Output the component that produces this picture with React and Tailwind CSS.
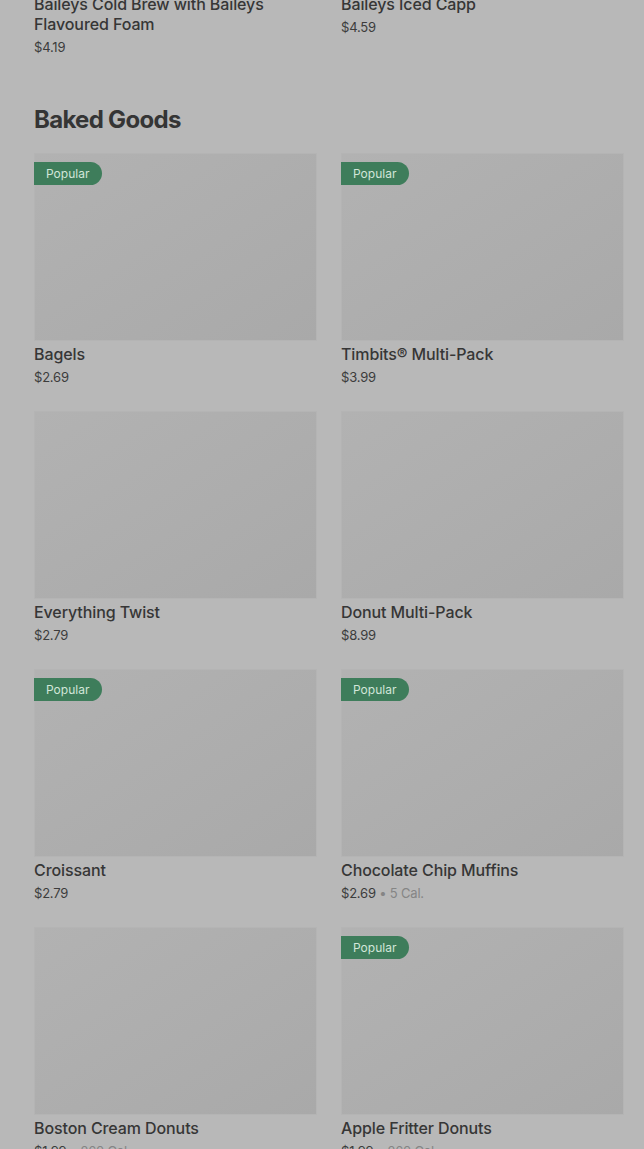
import React from "react";

const topItems = [
  { name: "Baileys Cold Brew with Baileys Flavoured Foam", price: "$4.19" },
  { name: "Baileys Iced Capp", price: "$4.59" },
];

const bakedGoods = [
  { name: "Bagels", price: "$2.69", popular: true },
  { name: "Timbits® Multi-Pack", price: "$3.99", popular: true },
  { name: "Everything Twist", price: "$2.79" },
  { name: "Donut Multi-Pack", price: "$8.99" },
  { name: "Croissant", price: "$2.79", popular: true },
  { name: "Chocolate Chip Muffins", price: "$2.69", cal: "5 Cal.", popular: true },
  { name: "Boston Cream Donuts", price: "$1.99", cal: "260 Cal." },
  { name: "Apple Fritter Donuts", price: "$1.99", cal: "260 Cal.", popular: true },
];

const Price = ({ price, cal }) => (
  <p className="mt-[4px] text-[13px] leading-[18px] tracking-[-0.2px] text-[#3c3c3c]">
    {price}
    {cal && <span className="text-[#858585]"> • {cal}</span>}
  </p>
);

const ItemCard = ({ item }) => (
  <div className="flex flex-col">
    <div className="relative h-[188px] bg-gradient-to-br from-[#b2b2b2] to-[#a9a9a9] border border-[#b4b4b4]">
      {item.popular && (
        <span className="absolute left-[-1px] top-[8px] h-[23px] flex items-center pl-[12px] pr-[13px] rounded-r-full bg-[#3e7d5b] text-[12px] text-[#d2e6d9]">
          Popular
        </span>
      )}
    </div>
    <h3 className="mt-[3px] text-[16px] leading-5 font-medium tracking-[-0.1px] text-[#363636]">
      {item.name}
    </h3>
    <Price price={item.price} cal={item.cal} />
  </div>
);

export default function App() {
  return (
    <div
      className="h-[1149px] overflow-hidden bg-[#b8b8b8] pl-[34px] pr-[20px]"
      style={{ fontFamily: "Inter, 'Noto Sans', sans-serif" }}
    >
      <div className="grid grid-cols-2 gap-x-[24px] mt-[-6px]">
        {topItems.map((item) => (
          <div key={item.name} className="flex flex-col">
            <h3 className="text-[16px] leading-5 font-medium tracking-[-0.1px] text-[#363636]">
              {item.name}
            </h3>
            <Price price={item.price} />
          </div>
        ))}
      </div>

      <h2 className="mt-[48px] mb-[17px] text-[24px] leading-[32px] font-bold tracking-[-0.7px] text-[#353535]">
        Baked Goods
      </h2>

      <div className="grid grid-cols-2 gap-x-[24px] gap-y-[25px]">
        {bakedGoods.map((item) => (
          <ItemCard key={item.name} item={item} />
        ))}
      </div>
    </div>
  );
}
